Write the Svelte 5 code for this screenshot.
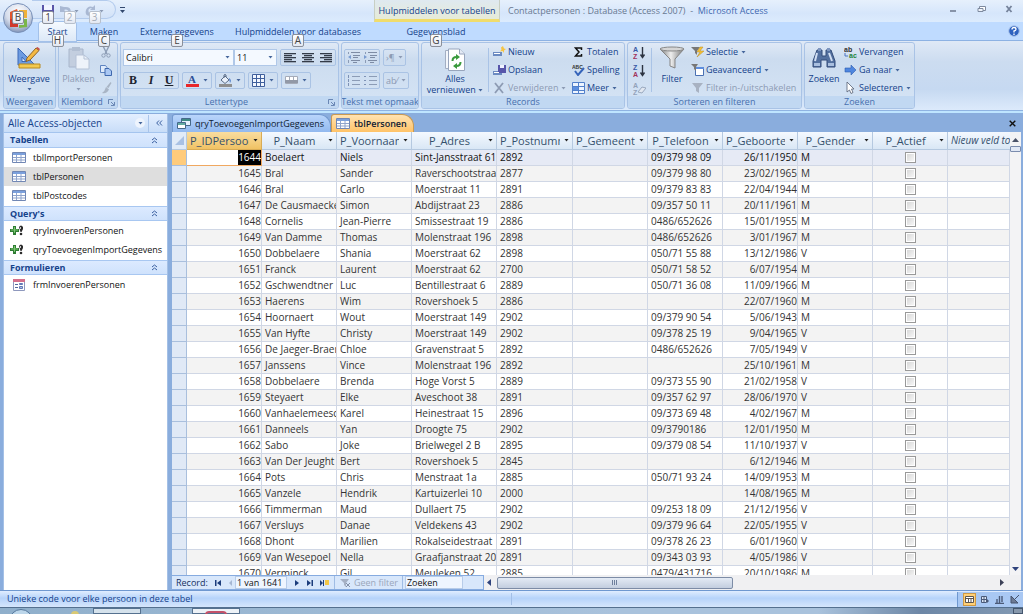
<script>
  const tabs = [
    { name: 'Start', key: 'H', cls: 'start' },
    { name: 'Maken', key: 'C', cls: 'make' },
    { name: 'Externe gegevens', key: 'E', cls: 'external' },
    { name: 'Hulpmiddelen voor databases', key: 'A', cls: 'tools' },
    { name: 'Gegevensblad', key: 'G', cls: 'sheet' }
  ];

  const sections = [
    { title: 'Tabellen', icon: 'table', items: ['tblImportPersonen', 'tblPersonen', 'tblPostcodes'] },
    { title: "Query's", icon: 'query', items: ['qryInvoerenPersonen', 'qryToevoegenImportGegevens'] },
    { title: 'Formulieren', icon: 'form', items: ['frmInvoerenPersonen'] }
  ];

  const columns = [
    'P_IDPersoon', 'P_Naam', 'P_Voornaam', 'P_Adres', 'P_Postnummer', 'P_Gemeente',
    'P_Telefoon', 'P_Geboorte', 'P_Gender', 'P_Actief'
  ];

  // id, naam, voornaam, adres, postnummer, telefoon, geboorte, gender
  const rows = [
    [1644, 'Boelaert', 'Niels', 'Sint-Jansstraat 61', '2892', '09/379 98 09', '26/11/1950', 'M'],
    [1645, 'Bral', 'Sander', 'Raverschootstraat', '2877', '09/379 98 80', '23/02/1965', 'M'],
    [1646, 'Bral', 'Carlo', 'Moerstraat 11', '2891', '09/379 83 83', '22/04/1944', 'M'],
    [1647, 'De Causmaecker', 'Simon', 'Abdijstraat 23', '2886', '09/357 50 11', '20/11/1961', 'M'],
    [1648, 'Cornelis', 'Jean-Pierre', 'Smissestraat 19', '2886', '0486/652626', '15/01/1955', 'M'],
    [1649, 'Van Damme', 'Thomas', 'Molenstraat 196', '2898', '0486/652626', '3/01/1967', 'M'],
    [1650, 'Dobbelaere', 'Shania', 'Moerstraat 62', '2898', '050/71 55 88', '13/12/1986', 'V'],
    [1651, 'Franck', 'Laurent', 'Moerstraat 62', '2700', '050/71 58 52', '6/07/1954', 'M'],
    [1652, 'Gschwendtner', 'Luc', 'Bentillestraat 6', '2889', '050/71 36 08', '11/09/1966', 'M'],
    [1653, 'Haerens', 'Wim', 'Rovershoek 5', '2886', '', '22/07/1960', 'M'],
    [1654, 'Hoornaert', 'Wout', 'Moerstraat 149', '2902', '09/379 90 54', '5/06/1943', 'M'],
    [1655, 'Van Hyfte', 'Christy', 'Moerstraat 149', '2902', '09/378 25 19', '9/04/1965', 'V'],
    [1656, 'De Jaeger-Braem', 'Chloe', 'Gravenstraat 5', '2892', '0486/652626', '7/05/1949', 'V'],
    [1657, 'Janssens', 'Vince', 'Molenstraat 196', '2892', '', '25/10/1961', 'M'],
    [1658, 'Dobbelaere', 'Brenda', 'Hoge Vorst 5', '2889', '09/373 55 90', '21/02/1958', 'V'],
    [1659, 'Steyaert', 'Elke', 'Aveschoot 38', '2891', '09/357 62 97', '28/06/1970', 'V'],
    [1660, 'Vanhaelemeesch', 'Karel', 'Heinestraat 15', '2896', '09/373 69 48', '4/02/1967', 'M'],
    [1661, 'Danneels', 'Yan', 'Droogte 75', '2902', '09/3790186', '12/01/1950', 'M'],
    [1662, 'Sabo', 'Joke', 'Brielwegel 2 B', '2895', '09/379 08 54', '11/10/1937', 'V'],
    [1663, 'Van Der Jeught', 'Bert', 'Rovershoek 5', '2845', '', '6/12/1946', 'M'],
    [1664, 'Pots', 'Chris', 'Menstraat 1a', '2885', '050/71 93 24', '14/09/1953', 'M'],
    [1665, 'Vanzele', 'Hendrik', 'Kartuizerlei 10', '2000', '', '14/08/1965', 'M'],
    [1666, 'Timmerman', 'Maud', 'Dullaert 75', '2902', '09/253 18 09', '21/12/1956', 'V'],
    [1667, 'Versluys', 'Danae', 'Veldekens 43', '2902', '09/379 96 64', '22/05/1955', 'V'],
    [1668, 'Dhont', 'Marilien', 'Rokalseidestraat', '2891', '09/378 26 23', '6/01/1960', 'V'],
    [1669, 'Van Wesepoel', 'Nella', 'Graafjanstraat 20', '2891', '09/343 03 93', '4/05/1986', 'V'],
    [1670, 'Verminck', 'Gil', 'Meuleken 52', '2885', '0479/431716', '20/10/1986', 'M']
  ];

  let activeTab = $state('Start');
  let selectedObject = $state('tblPersonen');
</script>

{#snippet arrow()}
  <svg class="arrow" viewBox="0 0 5 3" width="5" height="3"><path d="M.5 0h4L2.500 2.500z" fill="currentColor" /></svg>
{/snippet}

{#snippet tableIcon()}
  <svg viewBox="0 0 14 11" width="14" height="11">
    <path d="M.5.5h13v10H.5z" fill="#fff" stroke="#7187b4" />
    <path d="M1 1h12v2H1z" fill="#7ba0dc" />
    <path d="M1 5.500h12M1 8h12M4.500 3v7M9 3v7" stroke="#8fa4cc" fill="none" />
  </svg>
{/snippet}

{#snippet queryIcon()}
  <svg class="query" viewBox="0 0 14 11" width="14" height="11">
    <path d="M3 1h3v3h3v3H6v3H3V7H0V4h3z" fill="#2f7d33" />
    <path d="M1 5h7M4.500 2v6" stroke="#7cc671" />
    <path d="M9 2q2-3 4 0v2l-1.500 3h-1z" fill="#2b2b2b" />
    <circle cx="11" cy="9" r="1.300" fill="#2b2b2b" />
    <path d="M10.500 2v2" stroke="#ccc" />
  </svg>
{/snippet}

{#snippet formIcon()}
  <svg viewBox="0 0 14 12" width="14" height="12">
    <path d="M1.500.5h11v11h-11z" fill="#fff" stroke="#8e98bd" />
    <path d="M1 0h12v3H1z" fill="#d4708c" />
    <path d="M3 5.500h3M3 8.500h3" stroke="#55699b" />
    <path d="M7.500 4.500h3v1h-3zM7.500 7.500h3v2h-3z" fill="#a9bde6" stroke="#6379b4" />
  </svg>
{/snippet}

{#snippet chevrons()}
  <svg class="chevrons" viewBox="0 0 7 7" width="7" height="7"><path d="M1 3l2.500-2L6 3M1 6l2.500-2L6 6" fill="none" stroke="#3a5fa0" /></svg>
{/snippet}

{#snippet launcher()}
  <svg viewBox="0 0 7 7" width="7" height="7"><path d="M.5 5V.5H5M3 3l3 3M6.500 3v3.500H3" fill="none" stroke="#6a87b5" /></svg>
{/snippet}

{#snippet lines(w1, w2, side)}
  <svg viewBox="0 0 12 10" width="12" height="10">
    {#each [0, 1, 2, 3, 4] as i}
      {@const w = i % 2 ? w2 : w1}
      <rect x={side === 'left' ? 0 : side === 'right' ? 12 - w : (12 - w) / 2} y={i * 2} width={w} height="1.300" fill="#333b48" />
    {/each}
  </svg>
{/snippet}

{#snippet listIcon(dots)}
  <svg viewBox="0 0 13 11" width="13" height="11">
    <path d="M5 1.500h8M5 5.500h8M5 9.500h8" stroke="#8c9cb6" />
    <path d={dots ? 'M0 1.500h2M0 5.500h2M0 9.500h2' : 'M1.500 0v3M1.500 4v3M1.500 8v3'} stroke="#7d91b5" />
  </svg>
{/snippet}

{#snippet indentIcon(flip)}
  <svg viewBox="0 0 13 11" width="13" height="11">
    <path d="M4 .5h9M6 3.500h7M6 5.500h5M4 8.500h9M6 10.500h4" stroke="#7e8ca5" />
    <path d={flip ? 'M0 3l3 2-3 2z' : 'M4 3L1 5l3 2z'} fill="#7a9bd0" />
    <path d="M1.500 0v2M1.500 8v3" stroke="#8c9cb6" />
  </svg>
{/snippet}

{#snippet sortIcon(a, b)}
  <svg viewBox="0 0 13 13" width="13" height="13">
    <text x="0" y="6" class="sort" fill="#3757a5">{a}</text>
    <text x="0" y="13" class="sort" fill="#a2325c">{b}</text>
    <path d="M9.500 1v10M7.500 8.500l2 3 2-3" stroke="#2c3341" fill="none" stroke-width="1.400" />
  </svg>
{/snippet}

<div class="app">
  <header class="top">
    <button class="office" aria-label="Office-knop">
      <svg viewBox="0 0 32 32" width="32" height="32">
        <defs>
          <radialGradient id="orb" cx=".5" cy=".3" r=".7">
            <stop offset="0" stop-color="#fff" /><stop offset=".6" stop-color="#d5dceb" /><stop offset="1" stop-color="#8395b8" />
          </radialGradient>
        </defs>
        <circle cx="16" cy="16" r="14.500" fill="url(#orb)" stroke="#7890b8" />
        <path d="M8 10l7-3 1 3-5 2v5H8z" fill="#e2562c" />
        <path d="M17 8h8v8h-3v-5h-5z" fill="#f0b13a" />
        <path d="M8 17h3v5h5v3H8z" fill="#d0392b" />
        <path d="M22 17h3v8l-8 1v-3h5z" fill="#7ab648" />
      </svg>
      <kbd class="keytip">B</kbd>
    </button>

    <div class="titlebar">
      <div class="quick">
        <div class="quick-items">
          <button aria-label="Opslaan">
            <svg viewBox="0 0 12 12" width="12" height="12"><path d="M0 0h12v12H0z" fill="#5a55a8" /><path d="M2 0h8v5H2z" fill="#f2f5ff" /><path d="M3 8h6v4H3z" fill="#cfd5ee" /></svg>
            <kbd class="keytip">1</kbd>
          </button>
          <button class="off" aria-label="Ongedaan maken">
            <svg viewBox="0 0 12 12" width="12" height="12"><path d="M0 1v6h6L4 5q4-2 6 5 3-9-6-8z" fill="#a9b8d3" /></svg>
            {@render arrow()}
            <kbd class="keytip">2</kbd>
          </button>
          <button class="off" aria-label="Opnieuw">
            <svg viewBox="0 0 12 12" width="12" height="12"><path d="M10 0v5H5l2-2Q2 3 4 8l4 3Q-1 12 1 5 3 0 8 2z" fill="#a9b8d3" /></svg>
            {@render arrow()}
            <kbd class="keytip">3</kbd>
          </button>
        </div>
        <button class="customize" aria-label="Werkbalk aanpassen">
          <svg viewBox="0 0 5 6" width="5" height="6"><path d="M0 0h5v1H0zM0 3h5L2.500 6z" fill="#33486e" /></svg>
        </button>
      </div>
      <div class="context">Hulpmiddelen voor tabellen</div>
      <h1><span>Contactpersonen : Database (Access 2007)&nbsp; -</span>&nbsp; Microsoft Access</h1>
      <div class="window-buttons">
        <button aria-label="Minimaliseren"><svg viewBox="0 0 9 8" width="9" height="8"><path d="M1 5h6v2H1z" fill="#8793a8" /></svg></button>
        <button aria-label="Verkleinen"><svg viewBox="0 0 9 8" width="9" height="8"><path d="M2.500 1.500h6v4h-6z" fill="#fff" stroke="#7e8a9f" /><path d="M1 3.500h5v3H1z" fill="#eef3fb" stroke="#7e8a9f" /></svg></button>
        <button aria-label="Sluiten"><svg viewBox="0 0 9 8" width="9" height="8"><path d="M1.500 1l5 6M6.500 1l-5 6" stroke="#75839b" stroke-width="1.800" /></svg></button>
      </div>
    </div>

    <nav class="tabs">
      {#each tabs as tab}
        <button class="tab {tab.cls}" class:active={activeTab === tab.name} onclick={() => (activeTab = tab.name)}>
          {tab.name}<kbd class="keytip">{tab.key}</kbd>
        </button>
      {/each}
      <button class="help" aria-label="Help">
        <svg viewBox="0 0 12 12" width="12" height="12"><circle cx="6" cy="6" r="5.300" fill="#2e62bf" stroke="#a9c4ec" /><path d="M4 4.500q0-2 2-2t2 1.700Q8 5.500 6 6v1.500M6 8.500V10" stroke="#fff" stroke-width="1.300" fill="none" /></svg>
      </button>
    </nav>
  </header>

  <div class="ribbon">
    <section class="group views">
      <div class="body">
        <button class="big">
          <svg viewBox="0 0 24 24" width="24" height="24">
            <path d="M1 2l17 17H1z" fill="#6d9be0" stroke="#3b68b8" /><path d="M5 11l4 4.500H5z" fill="#dceafc" stroke="#3b68b8" />
            <path d="M2 18h21v4H2z" fill="#f3c94f" stroke="#b88a20" />
            <path d="M10 12l9-10 3 2.500L13 14l-4 1.500z" fill="#f4b942" stroke="#8d6428" /><path d="M19 2l3 2.500 1-1.500-2.500-2z" fill="#c6504b" />
          </svg>
          Weergave
          {@render arrow()}
        </button>
      </div>
      <h2>Weergaven</h2>
    </section>

    <section class="group clipboard">
      <div class="body">
        <button class="big off">
          <svg viewBox="0 0 24 24" width="24" height="24">
            <path d="M2 3h14v18H2z" fill="#c3cedf" stroke="#a8b6cc" /><path d="M5 1h8v4H5z" fill="#b2bfd3" />
            <path d="M9 9h8l5 4v10H9z" fill="#eef3fa" stroke="#b5c2d6" /><path d="M17 9v4h5" fill="none" stroke="#b5c2d6" />
          </svg>
          Plakken
          {@render arrow()}
        </button>
        <div class="stack icons">
          <button aria-label="Knippen"><svg viewBox="0 0 12 12" width="12" height="12"><path d="M3 0l4 8M9 0L5 8" stroke="#8d9db6" stroke-width="1.400" /><circle cx="3.500" cy="9.500" r="1.700" fill="none" stroke="#8d9db6" /><circle cx="8.500" cy="9.500" r="1.700" fill="none" stroke="#8d9db6" /></svg></button>
          <button aria-label="Kopiëren"><svg viewBox="0 0 12 12" width="12" height="12"><path d="M.5 1.500h5l1.500 2v5H.5z" fill="#dfebfb" stroke="#5d83c0" /><path d="M5 4.500h4l2.500 2.500v4.500H5z" fill="#a9c7f3" stroke="#3f68ae" /></svg></button>
          <button aria-label="Opmaak kopiëren"><svg viewBox="0 0 12 12" width="12" height="12"><path d="M10.500 0l1 1-3 5-2-1zM6 5l3 2.500Q7 12 2 11q3-2 4-6z" fill="#a9b5c5" /></svg></button>
        </div>
      </div>
      <h2>Klembord {@render launcher()}</h2>
    </section>

    <section class="group font">
      <div class="body column">
        <div class="line">
          <div class="fields">
            <label class="combo family"><input aria-label="Lettertype" value="Calibri" />{@render arrow()}</label>
            <label class="combo size"><input aria-label="Tekengrootte" value="11" />{@render arrow()}</label>
          </div>
          <div class="cluster">
            <button aria-label="Links uitlijnen">{@render lines(12, 8, 'left')}</button>
            <button aria-label="Centreren">{@render lines(12, 8, 'center')}</button>
            <button aria-label="Rechts uitlijnen">{@render lines(12, 8, 'right')}</button>
          </div>
        </div>
        <div class="line">
          <div class="cluster letters">
            <button><b>B</b></button>
            <button><i>I</i></button>
            <button><u>U</u></button>
          </div>
          <div class="cluster">
            <button aria-label="Tekstkleur">
              <svg viewBox="0 0 13 13" width="13" height="13"><path d="M0 10h13v3H0z" fill="#e8272a" /><text x="2" y="9" class="glyph" fill="#2d4f97">A</text></svg>
              {@render arrow()}
            </button>
          </div>
          <div class="cluster">
            <button aria-label="Opvulkleur">
              <svg viewBox="0 0 13 13" width="13" height="13"><path d="M0 10h13v3H0z" fill="#8f8f8f" /><path d="M2 6l4-4 4 4-4 3.500z" fill="#e9f0fa" stroke="#5b6c87" /><path d="M5 4V1q1-1 2 0v2" fill="none" stroke="#5b6c87" /><path d="M10 4q3 2 1 5z" fill="#4273c4" /></svg>
              {@render arrow()}
            </button>
          </div>
          <div class="cluster">
            <button aria-label="Rasterlijnen">
              <svg viewBox="0 0 13 13" width="13" height="13"><path d="M.5.5h12v12H.5zM4.500 0v13M8.500 0v13M0 4.500h13M0 8.500h13" fill="#f2f7ff" stroke="#3f5f9c" /></svg>
              {@render arrow()}
            </button>
          </div>
          <div class="cluster">
            <button aria-label="Alternatieve opvulkleur">
              <svg viewBox="0 0 13 10" width="13" height="10"><path d="M.5.5h12v7H.5zM4.500 0v8M8.500 0v8" fill="#fff" stroke="#a5abb8" /><path d="M0 4h13v3H0z" fill="#9299a7" /></svg>
              {@render arrow()}
            </button>
          </div>
        </div>
      </div>
      <h2>Lettertype {@render launcher()}</h2>
    </section>

    <section class="group richtext">
      <div class="body column">
        <div class="line">
          <div class="cluster"><button aria-label="Inspringing verkleinen">{@render indentIcon(false)}</button><button aria-label="Inspringing vergroten">{@render indentIcon(true)}</button></div>
          <div class="cluster off"><button aria-label="Tekstrichting">›¶ {@render arrow()}</button></div>
        </div>
        <div class="line">
          <div class="cluster"><button aria-label="Nummering">{@render listIcon(false)}</button><button aria-label="Opsommingstekens">{@render listIcon(true)}</button></div>
          <div class="cluster off"><button aria-label="Markeringskleur">ab⁄ {@render arrow()}</button></div>
        </div>
      </div>
      <h2>Tekst met opmaak</h2>
    </section>

    <section class="group records">
      <div class="body">
        <button class="big">
          <svg viewBox="0 0 22 24" width="22" height="24">
            <path d="M1.500 2.500h12v18h-12z" fill="#f4f7fc" stroke="#a3aec2" /><path d="M4.500 1h11l5 5v16.500h-16z" fill="#fff" stroke="#98a5bc" /><path d="M15.500 1v5h5" fill="#e4eaf5" stroke="#98a5bc" />
            <path d="M8.500 13q0-4 4-4M16.500 14q0 4-4 4" fill="none" stroke="#3a9a3d" stroke-width="2" /><path d="M12 6l4 3-4 3zM13 15l-4 3 4 3z" fill="#3a9a3d" />
          </svg>
          <span>Alles<br />vernieuwen {@render arrow()}</span>
        </button>
        <hr />
        <div class="stack first">
          <button><svg viewBox="0 0 13 12" width="13" height="12"><path d="M0 6h9v4H0z" fill="#6b8ac1" /><path d="M1 7h6v1H1z" fill="#fff" /><path d="M10 0l1 2.500L13 3l-2 1.500V7L9.500 5 7 5.500 8.500 3.500 8 1.500z" fill="#f6c443" /></svg>Nieuw</button>
          <button><svg viewBox="0 0 13 12" width="13" height="12"><path d="M0 7h9v4H0z" fill="#6b8ac1" /><path d="M5 1h8v8H5z" fill="#5755aa" /><path d="M7 1h4v3H7z" fill="#eff2ff" /><path d="M1 8.500h5" stroke="#fff" /></svg>Opslaan</button>
          <button class="off"><svg viewBox="0 0 13 12" width="13" height="12"><path d="M2 1l8 10M10 1L2 11" stroke="#8d9bb3" stroke-width="1.800" /></svg>Verwijderen {@render arrow()}</button>
        </div>
        <div class="stack">
          <button><svg viewBox="0 0 13 12" width="13" height="12"><path d="M9.500 4V2h-6l3.500 4-3.500 4h6V8" fill="none" stroke="#111" stroke-width="1.500" /></svg>Totalen</button>
          <button><svg viewBox="0 0 13 12" width="13" height="12"><text x="0" y="5" class="tiny" fill="#333">ABC</text><path d="M3 7l3 4 6-7" fill="none" stroke="#3664ba" stroke-width="2" /></svg>Spelling</button>
          <button><svg viewBox="0 0 13 12" width="13" height="12"><path d="M.5.5h12v11H.5zM0 4.500h13M0 8.500h13M6.500 0v12" fill="#eef5ff" stroke="#5280ca" /><path d="M1 5h5v3H1z" fill="#5c8fe0" /></svg>Meer {@render arrow()}</button>
        </div>
      </div>
      <h2>Records</h2>
    </section>

    <section class="group sorting">
      <div class="body">
        <div class="stack icons">
          <button aria-label="Oplopend sorteren">{@render sortIcon('A', 'Z')}</button>
          <button aria-label="Aflopend sorteren">{@render sortIcon('Z', 'A')}</button>
          <button aria-label="Sortering wissen"><svg viewBox="0 0 13 13" width="13" height="13"><text x="0" y="6" class="sort" fill="#93a2ba">A</text><text x="0" y="13" class="sort" fill="#93a2ba">Z</text><path d="M5 10l4-5 4 1-4 5z" fill="#e1e7f0" stroke="#9aa8be" /></svg></button>
        </div>
        <hr />
        <button class="big">
          <svg viewBox="0 0 26 24" width="26" height="24">
            <defs><linearGradient id="steel"><stop offset="0" stop-color="#777" /><stop offset=".45" stop-color="#eee" /><stop offset="1" stop-color="#777" /></linearGradient></defs>
            <path d="M1 3h24L16 13v9l-5-2v-7z" fill="url(#steel)" stroke="#858585" /><ellipse cx="13" cy="3" rx="12" ry="2" fill="#d6d6d6" stroke="#888" />
          </svg>
          Filter
        </button>
        <div class="stack">
          <button><svg viewBox="0 0 13 12" width="13" height="12"><path d="M0 1h9L6 5v4L4 7V5z" fill="#777" /><path d="M9 1L6 6h3l-3 5 7-6H9l3-4z" fill="#f7c436" stroke="#b98a24" stroke-width=".5" /></svg>Selectie {@render arrow()}</button>
          <button><svg viewBox="0 0 13 12" width="13" height="12"><path d="M4.500 3.500h8v8h-8z" fill="#fff" stroke="#4a70b3" /><path d="M4 3h9v2H4z" fill="#5e8ddd" /><path d="M0 0h7L5 3v4L3 5V3z" fill="#777" /></svg>Geavanceerd {@render arrow()}</button>
          <button class="off"><svg viewBox="0 0 13 12" width="13" height="12"><path d="M1 1h11L8 6v5L5 9V6z" fill="#a8b2c2" /></svg>Filter in-/uitschakelen</button>
        </div>
      </div>
      <h2>Sorteren en filteren</h2>
    </section>

    <section class="group find">
      <div class="body">
        <button class="big">
          <svg viewBox="0 0 24 24" width="24" height="24">
            <path d="M5 4h5v6h4V4h5l4 11v6h-8v-7H9v7H1v-6z" fill="#53709f" stroke="#344d7a" /><path d="M5 7l-2 8M17 7l3 8" stroke="#d1def2" stroke-width="2" /><path d="M2 17h6v3H2zM16 17h6v3h-6z" fill="#a9bfdf" /><path d="M6 2h3v3H6zM15 2h3v3h-3z" fill="#7d96c0" />
          </svg>
          Zoeken
        </button>
        <div class="stack">
          <button><svg viewBox="0 0 13 12" width="13" height="12"><text x="0" y="6" class="swap" fill="#333">ab</text><text x="5" y="12" class="swap" fill="#23833a">ac</text><path d="M1 7v3h3" fill="none" stroke="#4a73c0" /></svg>Vervangen</button>
          <button><svg viewBox="0 0 13 12" width="13" height="12"><path d="M1 4h6V1l5 5-5 5V8H1z" fill="#4f86df" stroke="#2e5cae" stroke-width=".6" /></svg>Ga naar {@render arrow()}</button>
          <button><svg viewBox="0 0 13 12" width="13" height="12"><path d="M3 0v10l2.500-2L7 11.500l2-1L7.500 7H10z" fill="#fff" stroke="#555f73" stroke-width=".8" /></svg>Selecteren {@render arrow()}</button>
        </div>
      </div>
      <h2>Zoeken</h2>
    </section>
  </div>

  <main>
    <aside>
      <div class="pane-title">
        Alle Access-objecten
        <button class="round" aria-label="Objecten kiezen">{@render arrow()}</button>
        <button class="collapse" aria-label="Navigatiedeelvenster sluiten">
          <svg viewBox="0 0 7 6" width="7" height="6"><path d="M3 .5L.7 3 3 5.500M6 .5L3.700 3 6 5.500" fill="none" stroke="#3a5fa0" /></svg>
        </button>
      </div>
      {#each sections as section}
        <h3>{section.title}{@render chevrons()}</h3>
        <ul>
          {#each section.items as item}
            <li>
              <button class:selected={item === selectedObject} onclick={() => (selectedObject = item)}>
                {#if section.icon === 'table'}{@render tableIcon()}{:else if section.icon === 'query'}{@render queryIcon()}{:else}{@render formIcon()}{/if}
                {item}
              </button>
            </li>
          {/each}
        </ul>
      {/each}
    </aside>

    <div class="document">
      <div class="doc-tabs">
        <button class="doc-tab">
          <svg viewBox="0 0 14 12" width="14" height="12"><path d="M4.500.5h9v7h-9z" fill="#e7f1ff" stroke="#45688a" /><path d="M5 1h8v2H5z" fill="#3f8a84" /><path d="M.5 4.500h8v6h-8z" fill="#fff" stroke="#45688a" /><path d="M1 5h7v2H1z" fill="#62aaa2" /></svg>
          <span>qryToevoegenImportGegevens</span>
        </button>
        <button class="doc-tab current">{@render tableIcon()}<span>tblPersonen</span></button>
        <button class="close" aria-label="Tabel sluiten"><svg viewBox="0 0 7 7" width="7" height="7"><path d="M.7.7l5.600 5.600M6.300.7L.7 6.300" stroke="#111" stroke-width="1.400" /></svg></button>
      </div>

      <div class="sheet-area">
        <div class="grid">
          <table>
            <colgroup>
              <col class="selector" />
              {#each columns as column}<col class={column} />{/each}
              <col />
            </colgroup>
            <thead>
              <tr>
                <th class="corner"><svg viewBox="0 0 9 9" width="9" height="9"><path d="M9 0v9H0z" fill="#a9c1e4" /></svg></th>
                {#each columns as column, i}
                  <th class:sorted={i === 0}><div class="head"><span>{column}</span>{@render arrow()}</div></th>
                {/each}
                <th class="new">Nieuw veld toevoegen</th>
              </tr>
            </thead>
            <tbody>
              {#each rows as [id, naam, voornaam, adres, post, telefoon, geboorte, gender], i}
                <tr class:current={i === 0}>
                  <td class="selector"></td>
                  <td class="number"><span>{id}</span></td>
                  <td>{naam}</td>
                  <td>{voornaam}</td>
                  <td>{adres}</td>
                  <td>{post}</td>
                  <td></td>
                  <td>{telefoon}</td>
                  <td class="number">{geboorte}</td>
                  <td>{gender}</td>
                  <td class="check"><input type="checkbox" aria-label="Actief {id}" /></td>
                  <td></td>
                </tr>
              {/each}
            </tbody>
          </table>
        </div>
        <div class="scroll-v">
          <svg viewBox="0 0 7 4" width="7" height="4"><path d="M0 4h7L3.500 0z" fill="#4a5268" /></svg>
          <div class="thumb"></div>
          <svg class="down" viewBox="0 0 7 4" width="7" height="4"><path d="M0 0h7L3.500 4z" fill="#2f437c" /></svg>
        </div>
      </div>

      <div class="record-bar">
        <div class="navigator">
          <label for="record">Record:</label>
          <button aria-label="Eerste record"><svg viewBox="0 0 6 6" width="6" height="6"><path d="M0 0h1.500v6H0zM6 0v6L2 3z" fill="#1c3d7c" /></svg></button>
          <button aria-label="Vorige record"><svg viewBox="0 0 6 6" width="6" height="6"><path d="M4 0v6L1 3z" fill="#a5b7d4" /></svg></button>
          <input id="record" class="position" value="1 van 1641" />
          <button aria-label="Volgende record"><svg viewBox="0 0 6 6" width="6" height="6"><path d="M1 0v6l4-3z" fill="#1c3d7c" /></svg></button>
          <button aria-label="Laatste record"><svg viewBox="0 0 6 6" width="6" height="6"><path d="M0 0v6l4-3zM4.500 0H6v6H4.500z" fill="#1c3d7c" /></svg></button>
          <button aria-label="Nieuwe record"><svg viewBox="0 0 9 7" width="9" height="7"><path d="M0 1v6l3-3z" fill="#1c3d7c" /><path d="M3.500 1v6" stroke="#1c3d7c" /><path d="M5 1h4v5H5z" fill="#f2c647" /></svg></button>
          <button class="no-filter" disabled>
            <svg viewBox="0 0 12 10" width="12" height="10"><path d="M1 1h9L7 5v4L5 7V5z" fill="#a5b0c4" /><path d="M7 5l4 4M11 5L7 9" stroke="#8391aa" /></svg>
            Geen filter
          </button>
          <input class="search" aria-label="Zoeken in tabel" value="Zoeken" />
        </div>
        <div class="scroll-h">
          <svg viewBox="0 0 4 7" width="4" height="7"><path d="M4 0v7L0 3.500z" fill="#2f437c" /></svg>
          <div class="thumb"><svg viewBox="0 0 6 5" width="6" height="5"><path d="M.5 0v5M2.500 0v5M4.500 0v5" stroke="#6e7f9c" /></svg></div>
          <svg class="right" viewBox="0 0 4 7" width="4" height="7"><path d="M0 0v7l4-3.500z" fill="#3c4157" /></svg>
        </div>
      </div>
    </div>
  </main>

  <footer>
    <span class="message">Unieke code voor elke persoon in deze tabel</span>
    <span class="spacer"></span>
    <div class="view-buttons">
      <button class="on" aria-label="Gegevensbladweergave"><svg viewBox="0 0 9 9" width="9" height="9"><path d="M.5 1.500h8v6h-8zM0 3.500h9M3.500 3v5M6 3v5" fill="#fff" stroke="#5a5550" /></svg></button>
      <button aria-label="Draaitabelweergave"><svg viewBox="0 0 9 9" width="9" height="9"><path d="M1.500 1.500h5v6h-5zM1 4.500h6M4 1v7" fill="#dce6f5" stroke="#4b5a78" /><path d="M7 4l2 2-2 2z" fill="#4b5a78" /></svg></button>
      <button aria-label="Draaigrafiekweergave"><svg viewBox="0 0 9 9" width="9" height="9"><path d="M0 8.500h9M2 4v4M4.500 1v7M7 1v6" stroke="#4b5a78" stroke-width="1.400" /></svg></button>
      <button aria-label="Ontwerpweergave"><svg viewBox="0 0 9 9" width="9" height="9"><path d="M1 1v7h7zM4 5l5-5" fill="#6d7b95" stroke="#46546f" /></svg></button>
    </div>
  </footer>

  <div class="taskbar">
    <span class="orb"></span>
    <span class="spark"></span>
    <span class="task"></span>
    <span class="task access"><i></i></span>
    <span class="peek"></span>
  </div>
</div>

<style>
  :global(body) {
    margin: 0;
  }

  .app {
    height: 100vh;
    display: flex;
    flex-direction: column;
    overflow: hidden;
    background: #bfdbff;
    color: #15428b;
    font: 9px/12px 'Open Sans', 'Noto Sans', sans-serif;
  }

  .app * {
    box-sizing: border-box;
  }

  button {
    border: 0;
    margin: 0;
    padding: 0;
    background: none;
    color: inherit;
    font: inherit;
    white-space: nowrap;
  }

  input {
    font: inherit;
    color: #111;
    min-width: 0;
  }

  svg {
    flex: none;
    display: block;
  }

  h1, h2, h3, ul {
    margin: 0;
    padding: 0;
    font-weight: normal;
    list-style: none;
  }

  .off {
    color: #8d9bb4;
  }

  .sort { font: bold 7px 'Liberation Sans', sans-serif; }
  .glyph { font: bold 11px 'Liberation Serif', serif; }
  .tiny { font: bold 5px 'Liberation Sans', sans-serif; }
  .swap { font: bold 7px 'Liberation Sans', sans-serif; }

  .keytip {
    position: absolute;
    z-index: 2;
    top: 12px;
    left: 50%;
    margin-left: -6px;
    width: 12px;
    height: 13px;
    border: 1px solid #8a8f99;
    border-radius: 2px;
    background: linear-gradient(#fff, #e3e8f2);
    color: #444;
    font: 10px/11px 'Open Sans', sans-serif;
    text-align: center;
  }

  /* Titelbalk en tabs */
  .top {
    position: relative;
    flex: none;
  }

  .office {
    position: absolute;
    z-index: 3;
    left: 2px;
    top: 2px;
  }

  .office .keytip { top: 9px; }

  .titlebar {
    display: flex;
    height: 22px;
    background: linear-gradient(#e6f0fc, #d6e6fb 60%, #dcebfd);
  }

  .quick {
    flex: 0 0 374px;
    display: flex;
    align-items: flex-start;
    padding-left: 32px;
  }

  .quick-items {
    display: flex;
    gap: 6px;
    width: 84px;
    height: 19px;
    padding: 4px 0 0 10px;
    border: 1px solid #b3cbed;
    border-left: 0;
    border-radius: 0 10px 10px 0;
    background: linear-gradient(#e5effc, #d2e2f8);
  }

  .quick-items button {
    position: relative;
    display: flex;
    align-items: center;
    gap: 2px;
    height: 12px;
  }

  .quick-items .keytip { top: 6px; }

  .quick-items .off .keytip {
    color: #a5acb8;
    border-color: #b8c0cc;
  }

  .customize { margin: 7px 0 0 4px; }

  .context {
    flex: 0 0 126px;
    border: solid #c8cfc4;
    border-width: 0 1px;
    border-bottom: 3px solid #f0dc6c;
    background: linear-gradient(#dfe9f0, #e6ebd8);
    line-height: 22px;
    text-align: center;
    white-space: nowrap;
  }

  h1 {
    flex: 1;
    padding-left: 8px;
    font-size: 9px;
    line-height: 22px;
    color: #3f68b0;
    white-space: nowrap;
  }

  h1 span { color: #697991; }

  .window-buttons {
    display: flex;
    align-items: flex-start;
    gap: 19px;
    padding: 5px 9px 0 0;
  }

  .tabs {
    display: flex;
    height: 19px;
    padding-left: 39px;
    border-bottom: 1px solid #8db2e3;
    background: #bfdbff;
  }

  .tab {
    position: relative;
    flex: none;
    height: 19px;
    border-radius: 3px 3px 0 0;
    line-height: 18px;
  }

  .tab.active {
    background: linear-gradient(#f5faff, #dce8f7);
    box-shadow: 0 0 0 1px #a3c1ea;
  }

  .start { width: 37px; }
  .make { width: 56px; }
  .external { width: 90px; }
  .tools { width: 152px; }
  .sheet { width: 124px; }

  .help { margin: 0 3px 0 auto; }

  /* Lint */
  .ribbon {
    flex: none;
    display: flex;
    gap: 2px;
    height: 70px;
    padding: 1px 3px;
    background: linear-gradient(#dfe9f6, #ccdcf0 30%, #c6d9f1 70%, #dceafb);
    border-bottom: 1px solid #8fb3e2;
  }

  .group {
    flex: none;
    display: flex;
    flex-direction: column;
    border: 1px solid #a9c3e6;
    border-radius: 3px;
    background: linear-gradient(#dfe9f6, #ccdcef 25%, #d5e4f5);
    overflow: hidden;
  }

  .views { width: 53px; }
  .clipboard { width: 60px; }
  .font { width: 219px; }
  .richtext { width: 78px; }
  .records { width: 204px; }
  .sorting { width: 175px; }
  .find { width: 111px; }

  .body {
    flex: 1;
    display: flex;
    padding: 2px 2px 0;
  }

  .body.column {
    flex-direction: column;
    gap: 6px;
    padding: 6px 2px 0;
  }

  h2 {
    display: flex;
    justify-content: center;
    align-items: center;
    height: 12px;
    background: #c1d8f2;
    color: #4870ae;
    font-size: 9px;
    white-space: nowrap;
  }

  .clipboard h2 svg { margin-left: 5px; }
  .font h2 { padding-right: 3px; }
  .font h2::before { content: ''; flex: 1; }
  .font h2 svg { margin-left: 80px; }

  .big {
    display: flex;
    flex-direction: column;
    align-items: center;
    gap: 3px;
    flex: none;
    padding-top: 1px;
  }

  .arrow { color: #46669c; }
  .off .arrow { color: #8d9bb4; }
  .views .big { width: 46px; }
  .clipboard .big { width: 35px; }
  .records .big { width: 62px; gap: 1px; line-height: 11px; padding-top: 3px; }
  .records .big span .arrow { display: inline; vertical-align: middle; }
  .sorting .big { width: 38px; }
  .find .big { width: 34px; margin-right: 3px; }

  .stack {
    display: flex;
    flex-direction: column;
    gap: 4px;
  }

  .stack button {
    display: flex;
    align-items: center;
    gap: 2px;
    height: 14px;
    line-height: 14px;
  }

  .stack button .arrow { margin-left: 1px; }
  .clipboard .stack { margin-left: 4px; }
  .records .first { width: 79px; }
  .sorting .icons { margin: 0 5px 0 3px; }

  hr {
    width: 1px;
    height: 44px;
    margin: 3px 4px 0 2px;
    border: 0;
    background: #a9c3e6;
  }

  .sorting hr { margin: 3px 1px 0 0; }

  .line {
    display: flex;
    gap: 3px;
  }

  .fields { display: flex; }

  .combo {
    display: flex;
    align-items: center;
    height: 17px;
    padding-right: 3px;
    border: 1px solid #b0c8e8;
    background: #f4f9ff;
  }

  .combo input {
    flex: 1;
    padding: 0 2px;
    border: 0;
    background: none;
    width: 20px;
  }

  .family { width: 111px; }
  .size { width: 43px; }

  .cluster {
    display: flex;
    align-items: center;
    height: 17px;
    border: 1px solid #aac3e4;
    border-radius: 2px;
  }

  .cluster button {
    display: flex;
    align-items: center;
    justify-content: center;
    gap: 4px;
    min-width: 18px;
    height: 15px;
    padding: 0 3px;
  }

  .letters button {
    color: #1d2430;
    font: bold 12px/15px 'Liberation Serif', serif;
  }

  .richtext .cluster button { padding: 0 2px; gap: 3px; min-width: 16px; }

  /* Navigatie */
  main {
    flex: 1;
    display: flex;
    gap: 4px;
    min-height: 0;
    padding: 3px 2px 0 3px;
    background: linear-gradient(#bfe5ff 2px, #8aaddd 2px);
  }

  aside {
    flex: 0 0 165px;
    background: #fff;
    border: 1px solid #a4c0e6;
    border-width: 0 1px;
  }

  .pane-title {
    display: flex;
    align-items: center;
    height: 19px;
    padding-left: 4px;
    background: linear-gradient(#e3efff, #c8ddf8);
    border-bottom: 1px solid #a4c4ee;
    font-size: 10px;
  }

  .round {
    display: grid;
    place-items: center;
    width: 10px;
    height: 10px;
    margin-left: auto;
    border-radius: 50%;
    background: #eef4fd;
  }

  .collapse {
    height: 17px;
    margin-left: 3px;
    padding: 0 4px 0 7px;
    border-left: 1px solid #a9c4ea;
  }

  h3 {
    display: flex;
    align-items: center;
    height: 15px;
    padding: 0 9px 0 6px;
    background: linear-gradient(#dceaff, #cfe2fc);
    border-bottom: 1px solid #a8c7f1;
    font-size: 9px;
    font-weight: bold;
  }

  ul + h3 { border-top: 1px solid #a8c7f1; }
  ul { padding-bottom: 1px; }

  .chevrons { margin-left: auto; }

  li button {
    display: flex;
    align-items: center;
    gap: 7px;
    width: 100%;
    height: 19px;
    padding-left: 8px;
    color: #111;
  }

  li .selected { background: #dedede; }
  .query { margin: 0 2px 0 -2px; }

  /* Gegevensblad */
  .document {
    flex: 1;
    display: flex;
    flex-direction: column;
    min-width: 0;
  }

  .doc-tabs {
    flex: none;
    display: flex;
    height: 18px;
  }

  .doc-tab {
    display: flex;
    align-items: center;
    gap: 4px;
    width: 159px;
    padding-left: 4px;
    border: 1px solid #7399cf;
    border-bottom: 0;
    border-radius: 3px 12px 0 0;
    background: linear-gradient(#b9d5fb, #92b9ef);
    color: #0f1c33;
  }

  .doc-tab.current {
    width: 83px;
    background: linear-gradient(#ffe3b2, #ffc368);
    border-color: #c99a52;
    font-weight: 600;
  }

  .close { margin: 0 5px 0 auto; }

  .sheet-area {
    flex: 1;
    display: flex;
    min-height: 0;
    background: #fff;
  }

  .grid {
    flex: 1;
    min-width: 0;
    overflow: hidden;
  }

  table {
    width: 100%;
    border-collapse: separate;
    border-spacing: 0;
    table-layout: fixed;
    color: #333;
    font-size: 10px;
    line-height: 15px;
  }

  col { width: 75px; }
  col.selector { width: 15px; }
  col.P_Adres { width: 85px; }
  col.P_Postnummer { width: 76px; }
  col:last-child { width: auto; }

  th {
    height: 18px;
    padding: 0 3px;
    border: solid #b5c9e0;
    border-width: 0 1px 1px 0;
    background: linear-gradient(#f4f9ff, #d9e7f5);
    font-size: 11px;
    font-weight: normal;
    color: #34506c;
    overflow: hidden;
    white-space: nowrap;
    text-align: left;
  }

  th.corner { padding: 0 0 0 3px; background: #e1ebf8; }
  th.sorted { background: linear-gradient(#f9dda0, #f0c264); border-color: #d9ac55; }
  th.new { font-size: 10px; font-style: italic; border-right: 0; }

  .head {
    display: flex;
    align-items: center;
    gap: 4px;
  }

  .head span {
    flex: 1;
    overflow: hidden;
    text-align: center;
  }

  .head .arrow { color: #222; }

  td {
    height: 16px;
    padding: 0 3px;
    border: solid #d0d7e5;
    border-width: 0 1px 1px 0;
    overflow: hidden;
    white-space: nowrap;
  }

  tr:nth-child(even) td { background: #f3f3f3; }
  tr td.selector, tr:nth-child(even) td.selector { background: #e0e9f6; border-color: #a9bfdd; }
  tr.current td { background: #e6eaf5; color: #111; }
  tr.current td.selector { background: #ffcb7b; }
  tr.current td.number:nth-child(2) { background: #fff; border-color: #f0a860; }
  tr.current td.number:nth-child(2) span { display: inline-block; background: #000; color: #fff; }

  td.number { padding: 0; text-align: right; }
  td.check { text-align: center; }

  td input {
    appearance: none;
    display: block;
    width: 11px;
    height: 11px;
    margin: 0 auto;
    border: 1px solid #999;
    background: linear-gradient(135deg, #d4d4d4, #fafafa);
    box-shadow: inset 0 0 0 1px #fff;
  }

  .scroll-v {
    flex: 0 0 11px;
    display: flex;
    flex-direction: column;
    align-items: center;
    padding: 6px 0 4px;
    background: #f3f3f5;
  }

  .scroll-v .thumb {
    width: 11px;
    height: 6px;
    margin-top: 4px;
    border: 1px solid #7b8cae;
    border-radius: 1px;
    background: #e1e8f5;
  }

  .down { margin-top: auto; }

  .record-bar {
    flex: none;
    display: flex;
    height: 15px;
    background: #f0f0f2;
    color: #15305f;
  }

  .navigator {
    display: flex;
    align-items: center;
    gap: 7px;
    width: 312px;
    padding-left: 4px;
    border: 1px solid #86abe0;
    border-left: 0;
    background: #d8e7fb;
  }

  .navigator input {
    height: 13px;
    padding: 0 1px;
    border: 1px solid #b7cce9;
    background: #eef5ff;
  }

  .navigator .position { width: 52px; margin-left: -6px; }
  .navigator .search { width: 58px; margin-left: -5px; }

  .no-filter {
    display: flex;
    align-items: center;
    gap: 3px;
    height: 13px;
    margin-left: -2px;
    padding: 0 4px;
    border: solid #9fbce4;
    border-width: 0 1px;
    color: #9aa6ba;
  }

  .scroll-h {
    flex: 1;
    display: flex;
    align-items: center;
    gap: 6px;
    padding: 0 17px 0 3px;
  }

  .scroll-h .thumb {
    display: grid;
    place-items: center;
    width: 236px;
    height: 12px;
    border: 1px solid #7d8ca6;
    border-radius: 2px;
    background: linear-gradient(#e4ebf5, #c3cedf);
  }

  .right { margin-left: auto; }

  footer {
    flex: none;
    display: flex;
    align-items: center;
    height: 17px;
    border-top: 1px solid #6f98d0;
    background: linear-gradient(#e0edff, #b6d3fa 45%, #d5e6fc);
  }

  .message {
    width: 50%;
    padding-left: 7px;
    border-right: 1px solid #a3bfe6;
  }

  .spacer { flex: 1; }

  .view-buttons {
    display: flex;
    align-items: center;
    gap: 2px;
    height: 15px;
    padding: 0 2px 0 5px;
    border-left: 1px solid #6f98d0;
    background: #a9c8f3;
  }

  .view-buttons button {
    display: grid;
    place-items: center;
    width: 13px;
    height: 13px;
  }

  .view-buttons .on { background: #ffd077; border: 1px solid #cf9a45; }

  .taskbar {
    flex: none;
    display: flex;
    height: 7px;
    overflow: hidden;
    border-top: 1px solid #54708f;
    background: linear-gradient(90deg, #8fafcb, #a9c2dc 60%, #a9c2dc 80%, #6d87a6 90%, #8299b3);
  }

  .orb {
    width: 24px;
    height: 24px;
    margin: 1px 0 0 9px;
    border-radius: 50%;
    background: #bcd6ea;
    border: 1px solid #55789d;
  }

  .spark {
    width: 8px;
    height: 8px;
    margin: 3px 14px 0 38px;
    border-radius: 50%;
    background: #d9c973;
  }

  .task {
    width: 48px;
    border: 1px solid #55718f;
    background: #d5e2ec;
  }

  .task.access { margin-left: 51px; padding: 2px 12px; background: #edf2f7; }

  .access i {
    display: block;
    height: 10px;
    border: 2px solid #c4526a;
    border-radius: 4px;
  }

  .peek {
    width: 10px;
    margin-left: auto;
    border: 1px solid #44566e;
    background: #8798ac;
  }
</style>
